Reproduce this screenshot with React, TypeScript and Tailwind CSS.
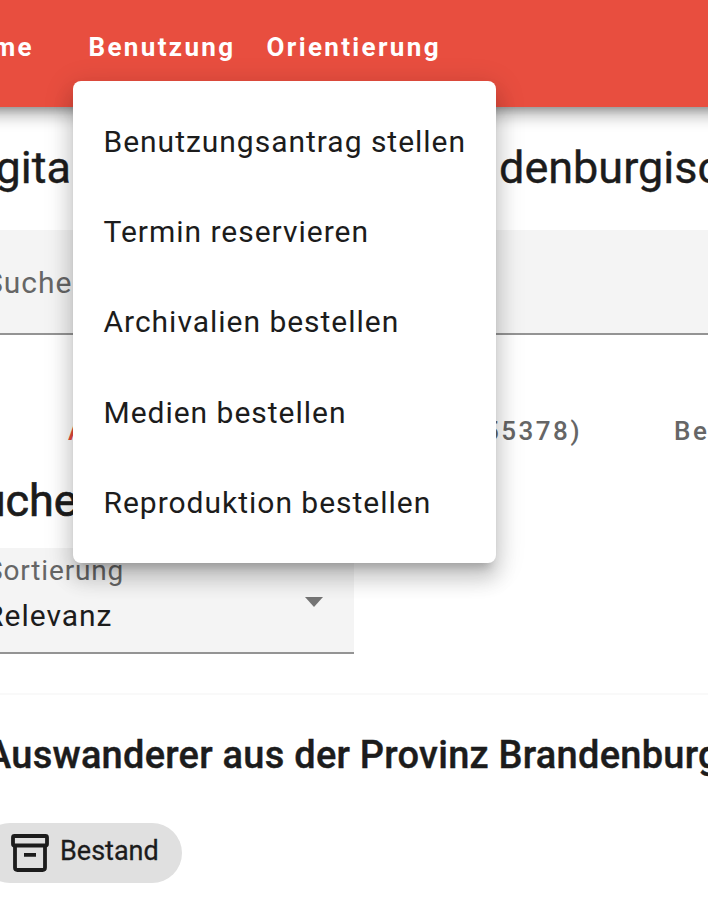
const items = ["Benutzungsantrag stellen", "Termin reservieren", "Archivalien bestellen", "Medien bestellen", "Reproduktion bestellen"];

export default function App() {
  return (
    <div className="relative h-[904px] w-[708px] overflow-hidden bg-white font-['Roboto',sans-serif] whitespace-nowrap text-[#1c1c1c]">
      <header className="-mx-10 flex h-[107px] bg-[#e84e3f] px-10 text-[26px] leading-[30px] font-bold tracking-[2.35px] text-white shadow-[0_4px_8px_-2px_rgba(0,0,0,0.3),0_7px_12px_4px_rgba(0,0,0,0.15),0_2px_20px_4px_rgba(0,0,0,0.12)]">
        <nav className="flex pt-[32px]">
          <a className="-ml-[45px] w-[133.5px] shrink-0">Home</a>
          <a className="w-[178px] shrink-0">Benutzung</a>
          <a className="shrink-0">Orientierung</a>
        </nav>
      </header>
      <main>
        <div className="flex h-[123px] pt-[34px] text-[45px] leading-[54px] [-webkit-text-stroke:0.4px]">
          <div className="-ml-[45px] w-[544px] shrink-0">Digitale</div>
          <div className="shrink-0">denburgische</div>
        </div>
        <div className="h-[105px] border-b-2 border-[#949494] bg-[#f4f4f4] pt-[35px] text-[30px] leading-[36px] tracking-[1px] text-[#666]">
          <span className="-ml-[15px]">Suche</span>
        </div>
        <div className="flex h-[137px] pt-[81px] text-[26px] leading-[30px] font-medium tracking-[2.5px] text-[#666]">
          <span className="ml-[68px] w-[416px] shrink-0 text-[#e84e3f]">Alle</span>
          <span className="w-[190px] shrink-0">55378)</span>
          <span className="shrink-0">Bestand</span>
        </div>
        <h2 className="h-[76px] pt-px text-[45px] leading-[56px] font-normal [-webkit-text-stroke:0.7px]"><span className="-ml-[46px]">Suche</span></h2>
        <div className="relative h-[106px] w-[354px] border-b-2 border-[#949494] bg-[#f4f4f4] pt-[7px]">
          <div className="-ml-[14px] text-[28px] leading-[32px] tracking-[0.85px] text-[#666]">Sortierung</div>
          <div className="-ml-[15px] mt-[11px] text-[30px] leading-[36px] tracking-[1px]">Relevanz</div>
          <div className="absolute top-[49px] left-[305px] border-x-[9.5px] border-t-[10px] border-x-transparent border-t-[#747474]" />
        </div>
        <div className="mt-[39px] h-[2px] bg-[#f9f9f9]" />
        <h3 className="-ml-[14px] mt-[37px] text-[38px] leading-[46px] font-medium tracking-[0.25px] [-webkit-text-stroke:0.4px]">Auswanderer aus der Provinz Brandenburg</h3>
        <div className="mt-[45px] -ml-[20px] flex h-[60px] w-[202px] items-center rounded-full bg-[#e0e0e0] pl-[31px]">
          <svg width="38" height="38" viewBox="0 0 38 38" fill="none" stroke="#1c1c1c" strokeWidth="3.8"><rect x="2" y="2" width="34" height="9.5" rx="1.5"/><path d="M4 11V33.500Q4 36 6.500 36H31.500Q34 36 34 33.500V11M13 20.800H25"/></svg>
          <span className="-mt-[3px] ml-[11px] text-[27px] [-webkit-text-stroke:0.3px]">Bestand</span>
        </div>
      </main>
      <div className="absolute top-[81px] left-[73px] h-[482px] w-[423px] rounded-[8px] bg-white pt-[15.4px] shadow-[0_10px_10px_-6px_rgba(0,0,0,0.2),0_16px_20px_2px_rgba(0,0,0,0.14),0_6px_28px_4px_rgba(0,0,0,0.12)]">
        {items.map((t) => <div key={t} className="flex h-[90.4px] items-center pl-[30.5px] text-[30px] leading-[36px] tracking-[0.98px]">{t}</div>)}
      </div>
    </div>
  );
}
